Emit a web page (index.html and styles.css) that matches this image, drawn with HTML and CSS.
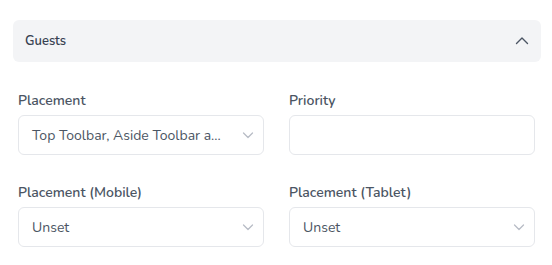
FILE: index.html
```html
<!DOCTYPE html>
<html lang="en">
<head>
  <meta charset="UTF-8" />
  <meta name="viewport" content="width=device-width, initial-scale=1.0"/>
  <title>Guests</title>
  <link rel="stylesheet" href="styles.css">
</head>
<body>

  <div class="panel">
    <span class="panel-title">Guests</span>
    <svg class="chevron-up" width="16" height="16" viewBox="0 0 16 16">
      <path d="M2.5 10.5 L8 5 L13.5 10.5" fill="none" stroke="#4b5563" stroke-width="1.4" stroke-linecap="round" stroke-linejoin="round"/>
    </svg>
  </div>

  <div class="fields">
    <div class="field">
      <label>Placement</label>
      <div class="select">
        <span class="value">Top Toolbar, Aside Toolbar a...</span>
        <svg class="chevron" width="14" height="14" viewBox="0 0 14 14">
          <path d="M2.5 5 L7 9.5 L11.5 5" fill="none" stroke="#b8bdc6" stroke-width="1.3" stroke-linecap="round" stroke-linejoin="round"/>
        </svg>
      </div>
    </div>

    <div class="field">
      <label>Priority</label>
      <input type="text" class="input">
    </div>

    <div class="field">
      <label>Placement (Mobile)</label>
      <div class="select">
        <span class="value">Unset</span>
        <svg class="chevron" width="14" height="14" viewBox="0 0 14 14">
          <path d="M2.5 5 L7 9.5 L11.5 5" fill="none" stroke="#b8bdc6" stroke-width="1.3" stroke-linecap="round" stroke-linejoin="round"/>
        </svg>
      </div>
    </div>

    <div class="field">
      <label>Placement (Tablet)</label>
      <div class="select">
        <span class="value">Unset</span>
        <svg class="chevron" width="14" height="14" viewBox="0 0 14 14">
          <path d="M2.5 5 L7 9.5 L11.5 5" fill="none" stroke="#b8bdc6" stroke-width="1.3" stroke-linecap="round" stroke-linejoin="round"/>
        </svg>
      </div>
    </div>
  </div>

</body>
</html>
```

FILE: styles.css
```css
body {
  margin: 0;
  padding: 20px 11px 0 13px;
  font-family: "Nunito", Lato, "Open Sans", sans-serif;
  background: #fff;
  color: #4b5563;
}

.panel {
  display: flex;
  align-items: center;
  justify-content: space-between;
  height: 42px;
  padding: 0 11px 0 12px;
  background: #f3f4f6;
  border-radius: 6px;
  box-sizing: border-box;
}

.panel-title {
  font-size: 13px;
  font-weight: 600;
  color: #374151;
}

.chevron-up {
  display: block;
}

.fields {
  display: grid;
  grid-template-columns: 1fr 1fr;
  column-gap: 25px;
  row-gap: 29px;
  padding: 0 6px 0 5px;
  margin-top: 30px;
}

.field label {
  display: block;
  font-size: 14px;
  font-weight: 600;
  color: #4b5563;
  line-height: 18px;
  margin-bottom: 5px;
}

.select,
.input {
  display: flex;
  align-items: center;
  justify-content: space-between;
  width: 100%;
  height: 40px;
  padding: 0 8px 0 13px;
  border: 1px solid #e5e7eb;
  border-radius: 6px;
  box-sizing: border-box;
  background: #fff;
}

.input {
  outline: none;
}

.value {
  font-size: 14px;
  color: #4b5563;
}

.chevron {
  display: block;
}
```
